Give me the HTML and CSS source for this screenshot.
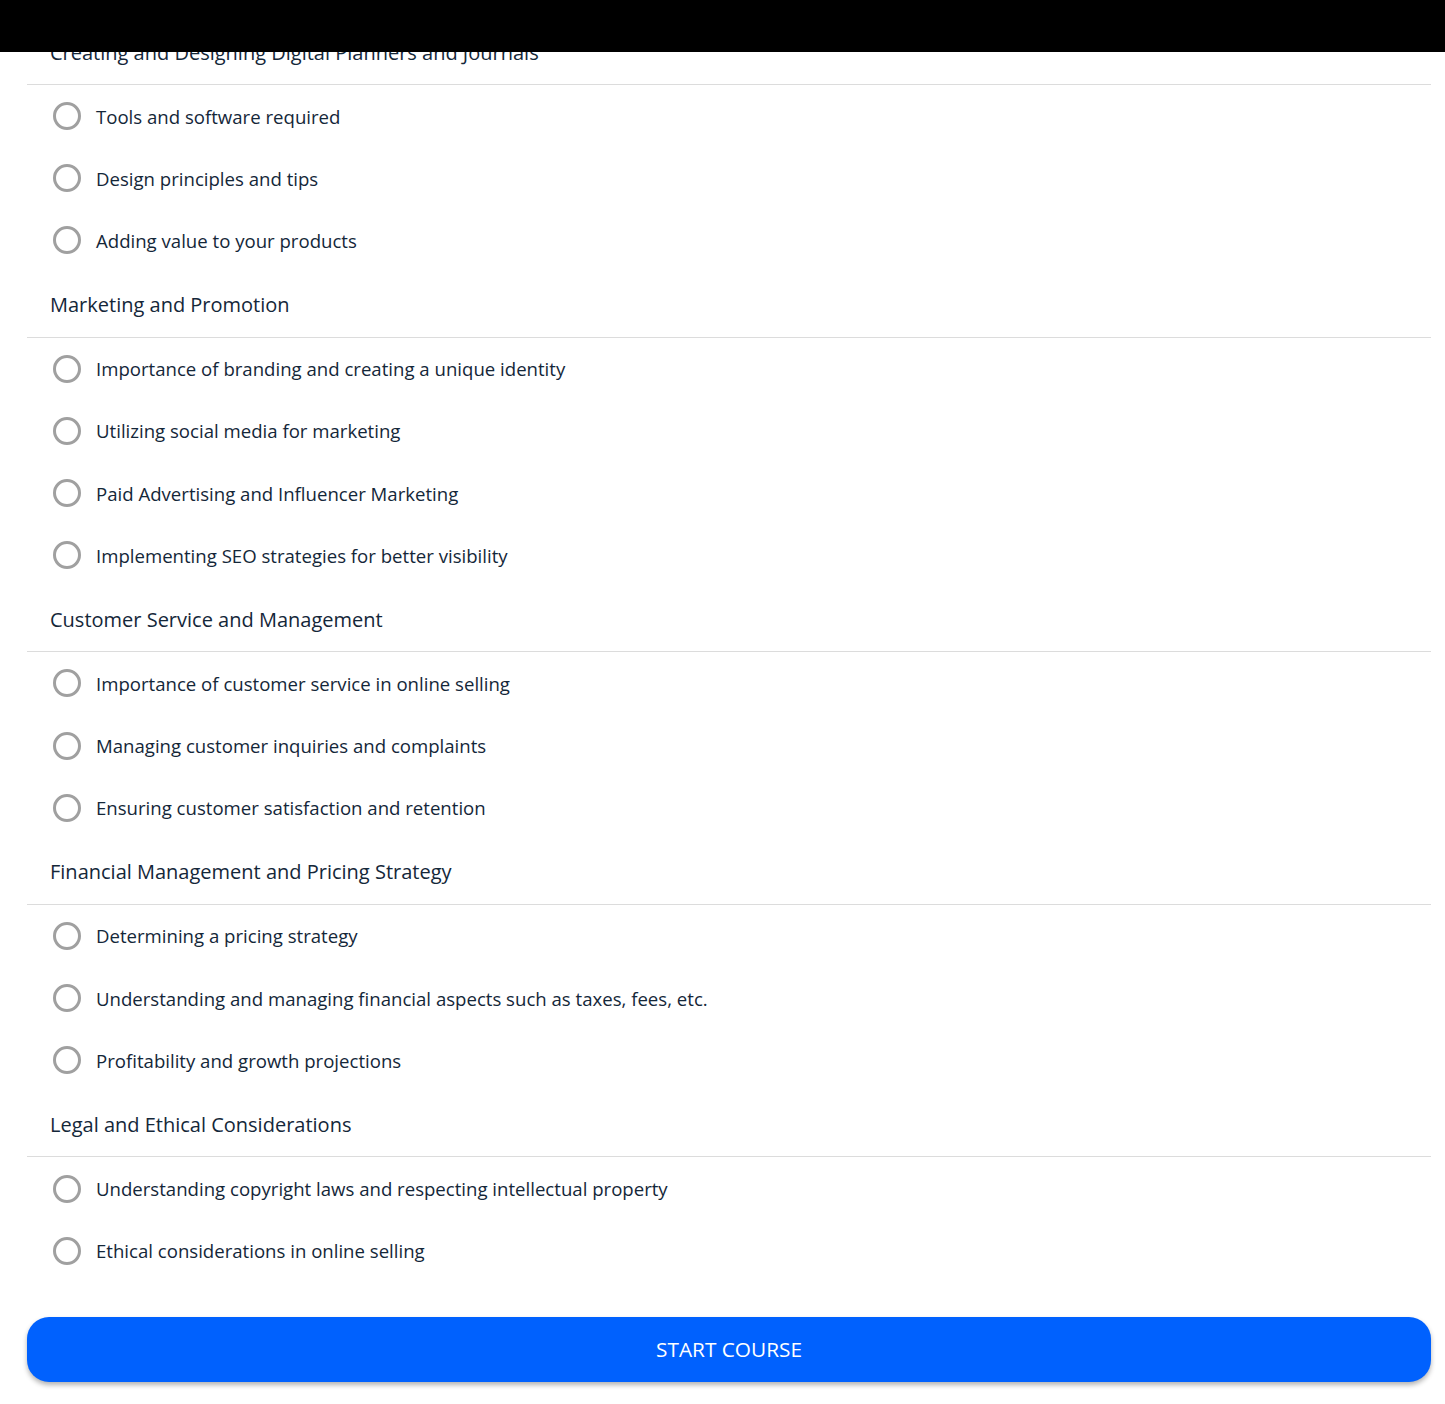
FILE: index.html
```html
<!DOCTYPE html>
<html lang="en">

<head>
    <meta charset="utf-8">
    <meta name="viewport" content="width=device-width, initial-scale=1.0">
    <title>Course outline</title>
    <link rel="stylesheet" href="styles.css">
</head>

<body>

    <div class="topbar"></div>

    <main class="outline">
        <section class="module">
            <h2>Creating and Designing Digital Planners and Journals</h2>
            <ul>
                <li><span class="check"></span>Tools and software required</li>
                <li><span class="check"></span>Design principles and tips</li>
                <li><span class="check"></span>Adding value to your products</li>
            </ul>
        </section>

        <section class="module">
            <h2>Marketing and Promotion</h2>
            <ul>
                <li><span class="check"></span>Importance of branding and creating a unique identity</li>
                <li><span class="check"></span>Utilizing social media for marketing</li>
                <li><span class="check"></span>Paid Advertising and Influencer Marketing</li>
                <li><span class="check"></span>Implementing SEO strategies for better visibility</li>
            </ul>
        </section>

        <section class="module">
            <h2>Customer Service and Management</h2>
            <ul>
                <li><span class="check"></span>Importance of customer service in online selling</li>
                <li><span class="check"></span>Managing customer inquiries and complaints</li>
                <li><span class="check"></span>Ensuring customer satisfaction and retention</li>
            </ul>
        </section>

        <section class="module">
            <h2>Financial Management and Pricing Strategy</h2>
            <ul>
                <li><span class="check"></span>Determining a pricing strategy</li>
                <li><span class="check"></span>Understanding and managing financial aspects such as taxes, fees, etc.</li>
                <li><span class="check"></span>Profitability and growth projections</li>
            </ul>
        </section>

        <section class="module">
            <h2>Legal and Ethical Considerations</h2>
            <ul>
                <li><span class="check"></span>Understanding copyright laws and respecting intellectual property</li>
                <li><span class="check"></span>Ethical considerations in online selling</li>
            </ul>
        </section>

        <button class="start">START COURSE</button>
    </main>

</body>

</html>
```

FILE: styles.css
```css
body {
    margin: 0;
    background-color: white;
    font-family: 'Open Sans', 'Noto Sans', sans-serif;
    color: #142739;
}

.topbar {
    position: fixed;
    top: 0;
    left: 0;
    right: 0;
    height: 52px;
    background-color: black;
    z-index: 2;
}

.outline {
    padding: 19px 14px 40px 27px;
}

.module h2 {
    margin: 0;
    height: 66px;
    display: flex;
    align-items: center;
    padding-left: 23px;
    padding-top: 1px;
    box-sizing: border-box;
    font-size: 20px;
    font-weight: 400;
    border-bottom: 1px solid #dcdcdc;
}

.module ul {
    list-style: none;
    margin: 0;
    padding: 0;
}

.module li {
    height: 62.2px;
    display: flex;
    align-items: center;
    font-size: 18.6px;
    padding-left: 26px;
}

.check {
    width: 22px;
    height: 22px;
    border: 3px solid #a0a0a0;
    border-radius: 50%;
    margin-right: 15px;
    flex-shrink: 0;
}

.start {
    display: block;
    width: 100%;
    height: 65px;
    margin-top: 35px;
    border: none;
    border-radius: 22px;
    background-color: #0061fe;
    color: white;
    font-family: 'Open Sans', 'Noto Sans', sans-serif;
    font-size: 20.8px;
    font-weight: 500;
    box-shadow: 0 3px 5px rgba(0, 0, 0, 0.3);
    cursor: pointer;
}
```
